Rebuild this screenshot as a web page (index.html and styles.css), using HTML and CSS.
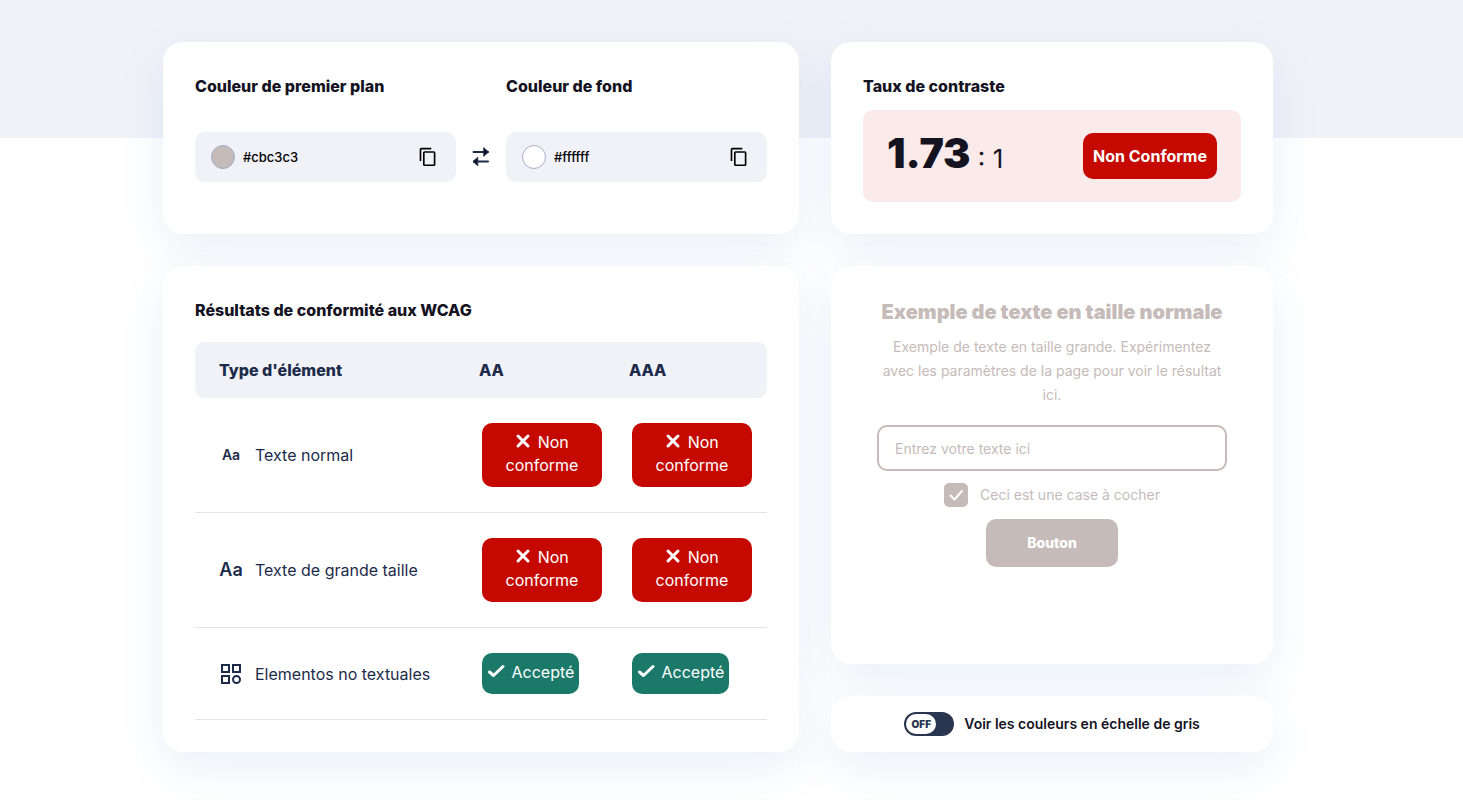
FILE: index.html
```html
<!DOCTYPE html>
<html lang="fr">
<head>
  <meta charset="UTF-8" />
  <meta name="viewport" content="width=device-width, initial-scale=1" />
  <title>Vérificateur de contraste</title>
  <link rel="stylesheet" href="styles.css">
</head>
<body>
  <main class="checker">
    <section class="card colors">
      <div class="color-field">
        <label class="card-title" for="foreground">Couleur de premier plan</label>
        <div class="color-box">
          <button class="swatch swatch-fg" type="button" aria-label="Choisir la couleur"></button>
          <input class="hex" type="text" id="foreground" value="#cbc3c3" />
          <button class="icon-btn" type="button" aria-label="Copier">
            <svg width="24" height="24" viewBox="0 0 24 24"><path d="M16 1H4a2 2 0 0 0-2 2v14h2V3h12V1zm3 4H8a2 2 0 0 0-2 2v14a2 2 0 0 0 2 2h11a2 2 0 0 0 2-2V7a2 2 0 0 0-2-2zm0 16H8V7h11v14z" transform="translate(2 2) scale(.83)" /></svg>
          </button>
        </div>
      </div>
      <button class="icon-btn swap" type="button" aria-label="Inverser les couleurs">
        <svg width="20" height="22" viewBox="0 0 20 22" fill="none" stroke="#1d2b4a" stroke-width="2" stroke-linecap="round" stroke-linejoin="round">
          <path d="M2.500 6H17M3 15.500h14" />
          <path d="M13 2l4.500 4-4.500 4zM6.500 11.500L2 15.500l4.500 4z" fill="#0d1326" stroke-width="1" />
        </svg>
      </button>
      <div class="color-field">
        <label class="card-title" for="background">Couleur de fond</label>
        <div class="color-box">
          <button class="swatch swatch-bg" type="button" aria-label="Choisir la couleur"></button>
          <input class="hex" type="text" id="background" value="#ffffff" />
          <button class="icon-btn" type="button" aria-label="Copier">
            <svg width="24" height="24" viewBox="0 0 24 24"><path d="M16 1H4a2 2 0 0 0-2 2v14h2V3h12V1zm3 4H8a2 2 0 0 0-2 2v14a2 2 0 0 0 2 2h11a2 2 0 0 0 2-2V7a2 2 0 0 0-2-2zm0 16H8V7h11v14z" transform="translate(2 2) scale(.83)" /></svg>
          </button>
        </div>
      </div>
    </section>

    <section class="card">
      <h2 class="card-title">Taux de contraste</h2>
      <div class="ratio">
        <p class="ratio-value"><strong>1.73</strong> : 1</p>
        <span class="ratio-status">Non Conforme</span>
      </div>
    </section>

    <section class="card results">
      <h2 class="card-title">Résultats de conformité aux WCAG</h2>
      <table class="wcag">
        <thead>
          <tr>
            <th class="type-col">Type d'élément</th>
            <th class="level-col">AA</th>
            <th class="level-col">AAA</th>
          </tr>
        </thead>
        <tbody>
          <tr>
            <td><div class="type"><span class="type-icon aa-small">Aa</span>Texte normal</div></td>
            <td><div class="pill fail"><svg width="16" height="16" viewBox="0 0 16 16"><path d="M3 3l10 10M13 3L3 13" /></svg> Non conforme</div></td>
            <td><div class="pill fail"><svg width="16" height="16" viewBox="0 0 16 16"><path d="M3 3l10 10M13 3L3 13" /></svg> Non conforme</div></td>
          </tr>
          <tr>
            <td><div class="type"><span class="type-icon aa-large">Aa</span>Texte de grande taille</div></td>
            <td><div class="pill fail"><svg width="16" height="16" viewBox="0 0 16 16"><path d="M3 3l10 10M13 3L3 13" /></svg> Non conforme</div></td>
            <td><div class="pill fail"><svg width="16" height="16" viewBox="0 0 16 16"><path d="M3 3l10 10M13 3L3 13" /></svg> Non conforme</div></td>
          </tr>
          <tr>
            <td>
              <div class="type">
                <span class="type-icon">
                  <svg width="24" height="24" viewBox="0 0 24 24" fill="none" stroke="#1d2b4a" stroke-width="2">
                    <path d="M3 3h7v7H3zM14 3h7v7h-7zM3 14h7v7H3z" />
                    <circle cx="17.500" cy="17.500" r="3.500" />
                  </svg>
                </span>Elementos no textuales
              </div>
            </td>
            <td><div class="pill pass"><svg width="18" height="16" viewBox="0 0 18 16"><path d="M2.500 9l4 3.500L16 3.500" /></svg> Accepté</div></td>
            <td><div class="pill pass"><svg width="18" height="16" viewBox="0 0 18 16"><path d="M2.500 9l4 3.500L16 3.500" /></svg> Accepté</div></td>
          </tr>
        </tbody>
      </table>
    </section>

    <div class="side">
      <section class="card preview">
        <h2>Exemple de texte en taille normale</h2>
        <p>Exemple de texte en taille grande. Expérimentez avec les paramètres de la page pour voir le résultat ici.</p>
        <input class="sample-input" type="text" placeholder="Entrez votre texte ici" aria-label="Entrez votre texte ici" />
        <label class="sample-check">
          <input type="checkbox" checked />
          <svg width="24" height="24" viewBox="0 0 24 24"><path d="M6.500 12.500l4 4 7.500-8.500" /></svg>
          <span>Ceci est une case à cocher</span>
        </label>
        <button class="sample-button" type="button">Bouton</button>
      </section>

      <section class="card grayscale">
        <label class="switch">
          <input type="checkbox" />
          <span class="track"><span class="knob">OFF</span></span>
          <span>Voir les couleurs en échelle de gris</span>
        </label>
      </section>
    </div>
  </main>
</body>
</html>
```
FILE: styles.css
```css
:root {
  --band: #f1f2f8;
  --text: #14131f;
  --navy: #1d2b4a;
  --red: #c50900;
  --green: #1b796a;
  --foreground: #c5bbb9;
  --background: #ffffff;
}

* {
  box-sizing: border-box;
  margin: 0;
  padding: 0;
}

body {
  min-height: 100vh;
  font-family: Inter, sans-serif;
  font-size: 16px;
  line-height: 24px;
  color: var(--text);
  background: linear-gradient(var(--band), var(--band)) no-repeat top / 100% 138px #fff;
  padding: 42px 43px 48px 16px;
}

button,
input {
  font: inherit;
  color: inherit;
  border: none;
  background: none;
}

button {
  cursor: pointer;
}

svg {
  display: block;
}

.checker {
  max-width: 1110px;
  margin: 0 auto;
  display: grid;
  grid-template-columns: minmax(0, 59fr) minmax(0, 41fr);
  gap: 32px;
}

.card {
  background: #fff;
  border-radius: 20px;
  padding: 32px;
  box-shadow: 0 16px 48px rgba(50, 120, 185, 0.1);
}

.card-title {
  display: block;
  font-size: 16px;
  font-weight: 800;
}

/* Colors */
.colors {
  display: flex;
  align-items: flex-start;
}

.color-field {
  flex: 1;
  min-width: 0;
}

.color-box {
  display: flex;
  align-items: center;
  gap: 8px;
  height: 50px;
  margin-top: 34px;
  padding: 0 16px;
  background: var(--band);
  border-radius: 10px;
}

.swatch {
  flex: none;
  width: 24px;
  height: 24px;
  border: 1px solid #a5aec8;
  border-radius: 50%;
}

.swatch-fg {
  background: var(--foreground);
}

.swatch-bg {
  background: var(--background);
}

.hex {
  flex: 1;
  min-width: 0;
  font-size: 13px;
  font-weight: 500;
  color: #000;
}

.icon-btn {
  flex: none;
}

.swap {
  width: 50px;
  height: 50px;
  margin-top: 58px;
  display: flex;
  align-items: center;
  justify-content: center;
}

/* Ratio */
.ratio {
  display: flex;
  align-items: center;
  justify-content: space-between;
  height: 92px;
  margin-top: 12px;
  padding: 0 24px;
  background: #fbeaea;
  border-radius: 10px;
}

.ratio-value {
  font-size: 26px;
  line-height: 48px;
}

.ratio-value strong {
  font-size: 41px;
  font-weight: 900;
}

.ratio-status {
  padding: 11px 10px;
  font-weight: 700;
  color: #fff;
  background: var(--red);
  border-radius: 10px;
}

/* WCAG results */
.wcag {
  width: 100%;
  margin-top: 20px;
  border-spacing: 0;
  table-layout: fixed;
  color: var(--navy);
}

.wcag th {
  height: 56px;
  padding: 0 12px;
  text-align: left;
  font-weight: 800;
  background: var(--band);
}

.wcag .type-col {
  padding-left: 24px;
  border-radius: 10px 0 0 10px;
}

.wcag .level-col {
  width: 150px;
}

.wcag .level-col:last-child {
  border-radius: 0 10px 10px 0;
}

.wcag td {
  padding: 25px 15px;
  border-bottom: 1px solid #e3e4e8;
}

.wcag td:first-child {
  padding: 0 0 0 24px;
}

.type {
  display: flex;
  align-items: center;
  gap: 12px;
}

.type-icon {
  width: 24px;
  text-align: center;
  font-weight: 600;
}

.aa-small {
  font-size: 14px;
}

.aa-large {
  font-size: 18px;
}

.pill {
  padding: 8px 5px 10px;
  line-height: 23px;
  text-align: center;
  color: #fff;
  border-radius: 10px;
}

.pill svg {
  display: inline-block;
  margin-right: 2px;
  fill: none;
  stroke: #fff;
  stroke-width: 3;
  stroke-linecap: round;
  stroke-linejoin: round;
  vertical-align: -1px;
}

.fail {
  padding-left: 20px;
  padding-right: 20px;
  background: var(--red);
}

.pass {
  width: fit-content;
  white-space: nowrap;
  background: var(--green);
}

/* Preview */
.side {
  display: flex;
  flex-direction: column;
  gap: 32px;
}

.preview {
  flex: 1;
  display: flex;
  flex-direction: column;
  align-items: center;
  gap: 12px;
  padding: 32px 46px;
  font-size: 14px;
  text-align: center;
  color: var(--foreground);
}

.preview h2 {
  font-size: 20px;
  line-height: 28px;
  font-weight: 900;
}

.preview p {
  margin: -3px 0 6px;
}

.sample-input {
  width: 100%;
  height: 46px;
  padding: 0 16px;
  border: 2px solid var(--foreground);
  border-radius: 10px;
}

.sample-input::placeholder {
  color: var(--foreground);
}

.sample-check {
  position: relative;
  display: flex;
  gap: 12px;
}

.sample-check input {
  position: absolute;
  width: 24px;
  height: 24px;
  opacity: 0;
}

.sample-check svg {
  background: var(--foreground);
  border-radius: 5px;
  fill: none;
  stroke: var(--background);
  stroke-width: 2;
  stroke-linecap: round;
  stroke-linejoin: round;
}

.sample-button {
  min-width: 132px;
  padding: 12px 40px;
  font-weight: 800;
  color: var(--background);
  background: var(--foreground);
  border-radius: 10px;
}

/* Grayscale switch */
.grayscale {
  display: flex;
  justify-content: center;
  padding: 16px;
}

.switch {
  position: relative;
  display: flex;
  align-items: center;
  gap: 10px;
  font-size: 14px;
  font-weight: 600;
  cursor: pointer;
}

.switch input {
  position: absolute;
  left: 0;
  width: 50px;
  height: 24px;
  opacity: 0;
}

.track {
  width: 50px;
  height: 24px;
  padding: 2px;
  background: #2a3550;
  border-radius: 12px;
}

.knob {
  display: block;
  width: 30px;
  font-size: 10px;
  line-height: 20px;
  font-weight: 900;
  text-align: center;
  color: #2a3550;
  background: #fff;
  border-radius: 10px;
}

@media (max-width: 900px) {
  .checker {
    grid-template-columns: minmax(0, 1fr);
  }
}
```
